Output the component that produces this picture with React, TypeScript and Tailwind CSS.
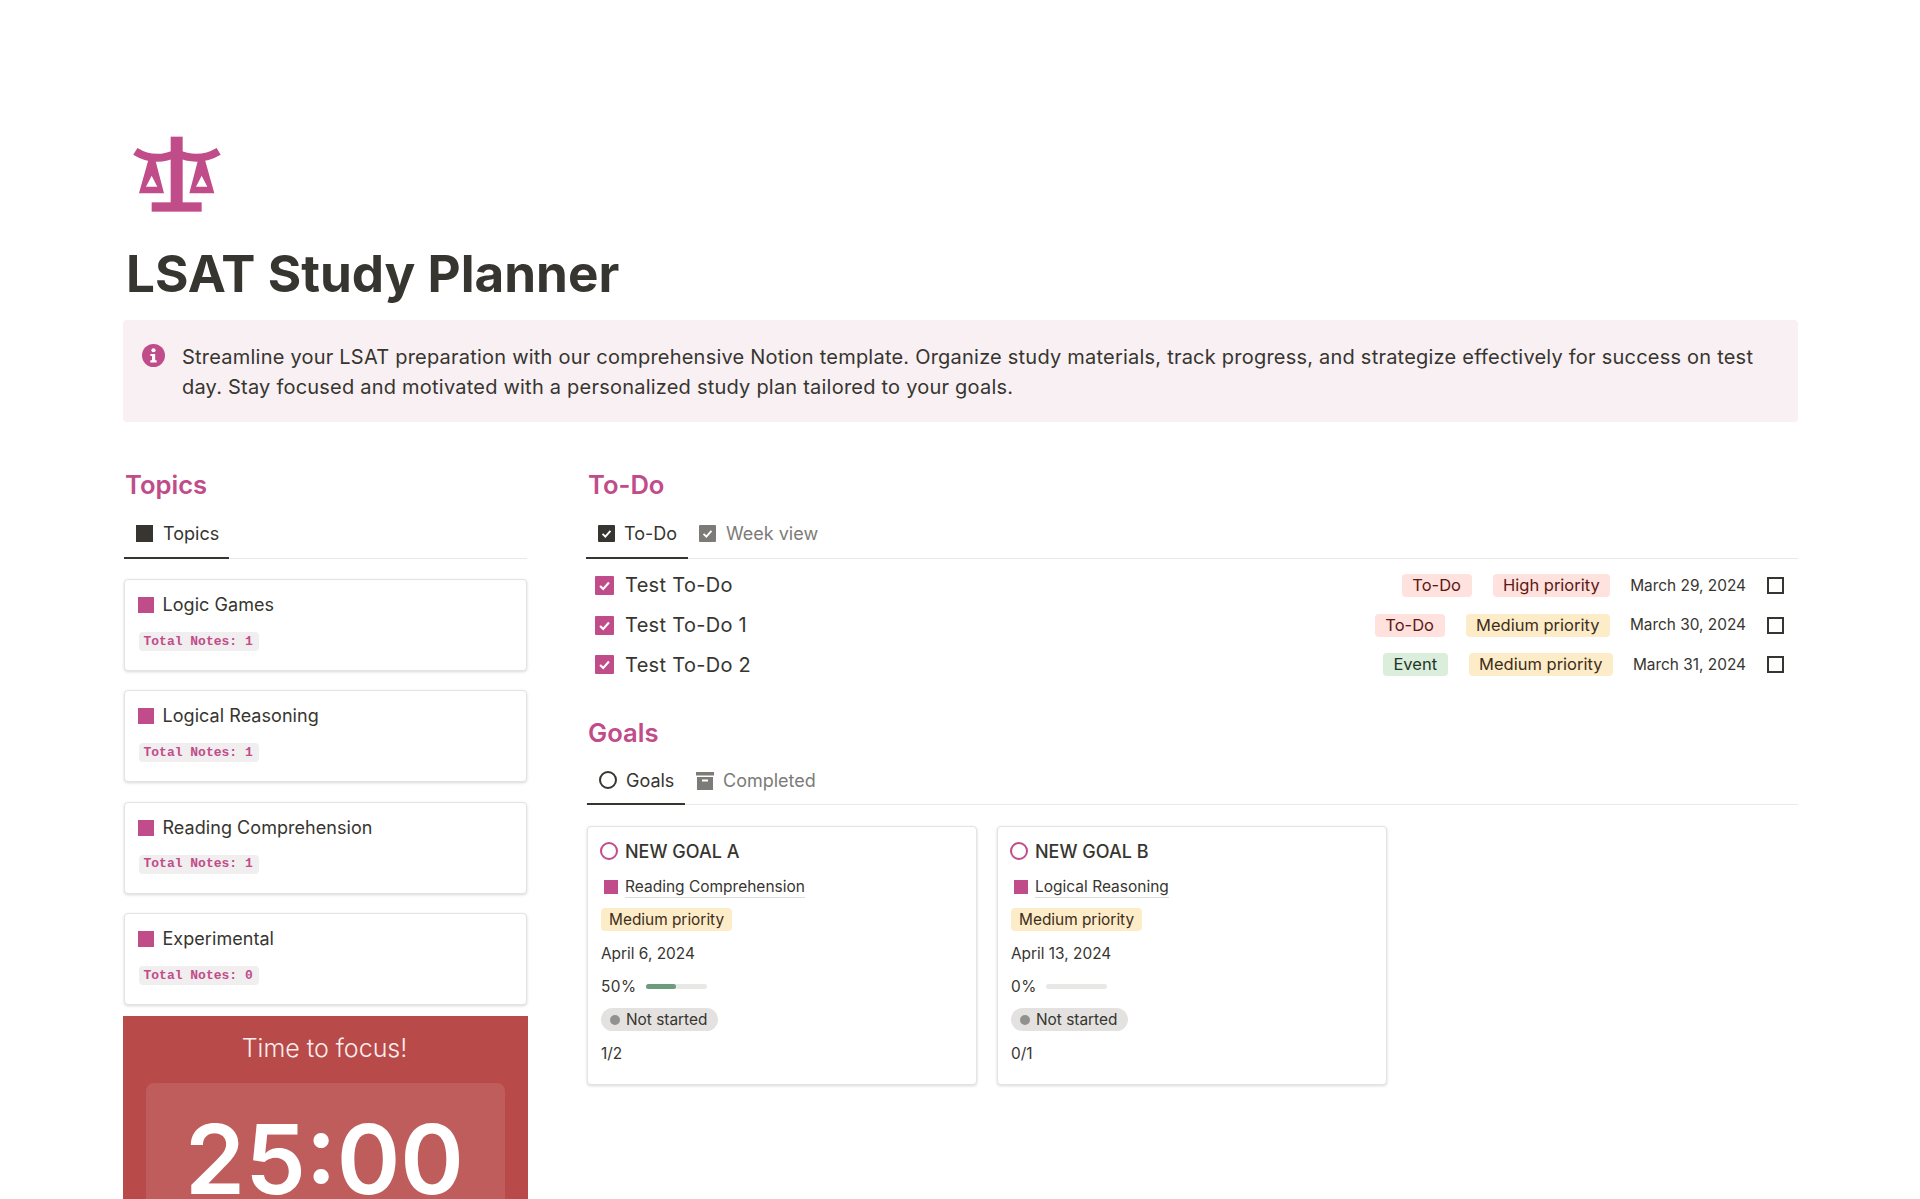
const PINK = '#c14c8a'

const topics = [
  { name: 'Logic Games', notes: 1 },
  { name: 'Logical Reasoning', notes: 1 },
  { name: 'Reading Comprehension', notes: 1 },
  { name: 'Experimental', notes: 0 },
]

const tagStyles = {
  red: 'bg-[#ffe2dd] text-[#5d1715]',
  yellow: 'bg-[#fdecc8] text-[#402c1b]',
  green: 'bg-[#dbeddb] text-[#1c3829]',
}

type TagColor = keyof typeof tagStyles

const todos: { title: string; kind: [string, TagColor]; priority: [string, TagColor]; date: string }[] = [
  { title: 'Test To-Do', kind: ['To-Do', 'red'], priority: ['High priority', 'red'], date: 'March 29, 2024' },
  { title: 'Test To-Do 1', kind: ['To-Do', 'red'], priority: ['Medium priority', 'yellow'], date: 'March 30, 2024' },
  { title: 'Test To-Do 2', kind: ['Event', 'green'], priority: ['Medium priority', 'yellow'], date: 'March 31, 2024' },
]

const goals = [
  { title: 'NEW GOAL A', topic: 'Reading Comprehension', date: 'April 6, 2024', pct: 50, count: '1/2' },
  { title: 'NEW GOAL B', topic: 'Logical Reasoning', date: 'April 13, 2024', pct: 0, count: '0/1' },
]

function ScalesIcon() {
  return (
    <svg viewBox="0 0 360 300" className="block h-[100px] w-[120px]" fill={PINK}>
      <rect x="152" y="35" width="36" height="200" />
      <rect x="95" y="232" width="150" height="28" />
      <path d="M46 79 C 80 100, 120 108, 170 84 C 220 108, 260 100, 296 79" fill="none" stroke={PINK} strokeWidth="24" />
      <path fillRule="evenodd" d="M85 105 H106 L132 205 H57 Z M95 152 L78 185 H112 Z" />
      <path fillRule="evenodd" d="M234 105 H255 L283 205 H208 Z M245 152 L228 185 H262 Z" />
    </svg>
  )
}

function InfoIcon() {
  return (
    <svg viewBox="0 0 22 22" className="h-[23px] w-[23px] shrink-0">
      <circle cx="11" cy="11" r="11" fill={PINK} />
      <circle cx="11" cy="6" r="2" fill="#fff" />
      <path d="M8 9.5 H12.6 V15.6 H14 V17.6 H8 V15.6 H9.6 V11.5 H8 Z" fill="#fff" />
    </svg>
  )
}

function CheckBox({ color, size }: { color: string; size: number }) {
  return (
    <svg viewBox="0 0 18 18" width={size} height={size} className="shrink-0">
      <rect width="18" height="18" rx="1" fill={color} />
      <path d="M4.8 9.4 L7.8 12.3 L13.2 6.2" fill="none" stroke="#fff" strokeWidth="2" />
    </svg>
  )
}

function ArchiveIcon() {
  return (
    <svg viewBox="0 0 18 18" className="h-[18px] w-[18px] shrink-0" fill="#7c7b77">
      <rect x="0" y="0" width="18" height="3.5" />
      <path fillRule="evenodd" d="M1 5 H17 V18 H1 Z M6 7.5 V9.5 H12 V7.5 Z" />
    </svg>
  )
}

function Tag({ label, color }: { label: string; color: TagColor }) {
  return <span className={`flex h-[23px] items-center rounded-[4px] px-[10.5px] text-[16.5px] ${tagStyles[color]}`}>{label}</span>
}

function Heading({ children }: { children: string }) {
  return <h2 className="pl-[2px] text-[25.6px] leading-[32px] font-semibold text-[#c14c8a]">{children}</h2>
}

function TopicCard({ name, notes }: { name: string; notes: number }) {
  return (
    <div className="h-[92px] rounded-[4px] border border-[#e3e3e2] bg-white pt-4 pl-[13.5px] shadow-[0_1px_3px_rgba(15,15,15,0.16)]">
      <div className="flex h-[18px] items-center">
        <span className="h-4 w-4 bg-[#c14c8a]" />
        <span className="ml-[8.5px] text-[18px] leading-[24px] tracking-[0.05px]">{name}</span>
      </div>
      <code className="mt-[18px] ml-[1px] flex h-[19px] w-[120px] items-center rounded-[4px] bg-[#f0eeee] pl-[4.5px] font-['Liberation_Mono',monospace] text-[13px] font-bold text-[#c14c8a]">
        Total Notes: {notes}
      </code>
    </div>
  )
}

function GoalCard({ goal }: { goal: (typeof goals)[number] }) {
  return (
    <div className="h-[259px] w-[390px] rounded-[4px] border border-[#e3e3e2] bg-white pt-[12px] pl-[13px] shadow-[0_1px_3px_rgba(15,15,15,0.16)]">
      <div className="flex h-[24px] items-center">
        <span className="ml-[-1px] h-[18px] w-[18px] rounded-full border-2 border-[#c14c8a]" />
        <span className="ml-[7px] text-[18px] font-medium">{goal.title}</span>
      </div>
      <div className="mt-[12px] flex h-[24px] items-center">
        <span className="ml-[3px] h-[14px] w-[14px] bg-[#c14c8a]" />
        <span className="ml-[7px] border-b border-[#dcdcda] text-[15.5px] leading-[20px]">{goal.topic}</span>
      </div>
      <span className="mt-[9px] flex h-[23px] w-fit items-center rounded-[4px] bg-[#fdecc8] px-2 text-[15.4px] text-[#402c1b]">Medium priority</span>
      <p className="mt-[11px] h-[24px] text-[15.4px] leading-[24px]">{goal.date}</p>
      <div className="mt-[8px] flex h-[24px] items-center">
        <span className="text-[15.4px] tracking-[0.5px]">{goal.pct}%</span>
        <div className="ml-[9px] h-[5px] w-[61px] rounded-full bg-[#e8e8e6]">
          <div className="h-[5px] rounded-full bg-[#6c9b7d]" style={{ width: `${goal.pct}%` }} />
        </div>
      </div>
      <span className="mt-[10px] flex h-[23px] w-fit items-center rounded-full bg-[#e3e2e0] pr-[11px] pl-[9px] text-[15.4px]">
        <span className="mr-[6px] h-[10px] w-[10px] rounded-full bg-[#91918e]" />
        Not started
      </span>
      <p className="mt-[11px] text-[15.4px] leading-[24px]">{goal.count}</p>
    </div>
  )
}

export default function App() {
  return (
    <div className="h-[1199px] overflow-hidden bg-white pt-[125px] pr-[122px] pl-[123px] font-['Inter',sans-serif] text-[#37352f]">
      <div className="ml-[-3px]">
        <ScalesIcon />
      </div>
      <h1 className="mt-[18px] ml-[3px] text-[51.2px] leading-[60px] font-bold">LSAT Study Planner</h1>
      <div className="mt-[17px] flex h-[102px] rounded-[4px] bg-[#f8f0f3] pt-[24px] pr-[30px] pl-[19px]">
        <InfoIcon />
        <p className="mt-[-2px] ml-[17px] text-[20px] leading-[30px] tracking-[0.22px]">
          Streamline your LSAT preparation with our comprehensive Notion template. Organize study materials, track progress, and strategize effectively for success on test day. Stay focused and motivated with a personalized study plan tailored to your goals.
        </p>
      </div>

      <div className="mt-[47px] flex">
        <aside className="w-[405px] shrink-0">
          <Heading>Topics</Heading>
          <div className="mx-px mt-[8px] flex h-[50px] border-b border-[#e9e9e8]">
            <div className="mb-[-1px] flex w-[105px] items-center border-b-2 border-[#37352f] pl-[12px] text-[18px]">
              <span className="h-[17px] w-[17px] bg-[#37352f]" />
              <span className="ml-[10px]">Topics</span>
            </div>
          </div>
          <div className="mt-[20px] flex flex-col gap-[19.3px] pr-px pl-[0.5px]">
            {topics.map((t) => (
              <TopicCard key={t.name} name={t.name} notes={t.notes} />
            ))}
          </div>
          <div className="mt-[11px] h-[300px] bg-[#b84a4a] pt-[16px] text-center">
            <p className="pr-[2px] text-[25px] leading-[32px] font-light text-[#fdeeee]">Time to focus!</p>
            <div className="mx-[23px] mt-[19px] h-[200px] rounded-[8px] bg-[#bf5c5c] pt-[16px] pr-[2px] text-[96.5px] leading-[120px] font-semibold text-white">
              25:00
            </div>
          </div>
        </aside>

        <main className="ml-[58px] min-w-0 flex-1">
          <Heading>To-Do</Heading>
          <div className="mt-[8px] flex h-[50px] border-b border-[#e9e9e8]">
            <div className="mb-[-1px] flex w-[102px] items-center border-b-2 border-[#37352f] pl-[12px] text-[18px]">
              <CheckBox color="#37352f" size={17} />
              <span className="ml-[9px]">To-Do</span>
            </div>
            <div className="ml-[11px] flex items-center text-[18px] text-[#7c7b77]">
              <CheckBox color="#7c7b77" size={17} />
              <span className="ml-[10px]">Week view</span>
            </div>
          </div>
          <div className="mt-[6.5px] flex flex-col">
            {todos.map((t) => (
              <div key={t.title} className="flex h-[39.7px] items-center pr-[14px] pl-[9px]">
                <CheckBox color={PINK} size={19} />
                <span className="ml-[11px] text-[20px] tracking-[0.3px]">{t.title}</span>
                <div className="ml-auto flex items-center gap-[20px]">
                  <div className="mr-px">
                    <Tag label={t.kind[0]} color={t.kind[1]} />
                  </div>
                  <Tag label={t.priority[0]} color={t.priority[1]} />
                  <span className="text-[15.4px]">{t.date}</span>
                  <span className="ml-px h-[17px] w-[17px] border-2 border-[#37352f]" />
                </div>
              </div>
            ))}
          </div>

          <div className="mt-[32.5px]">
            <Heading>Goals</Heading>
          </div>
          <div className="mt-[8px] flex h-[48px] border-b border-[#e9e9e8]">
            <div className="mb-[-1px] ml-px flex w-[98px] items-center border-b-2 border-[#37352f] pl-[12px] text-[18px]">
              <span className="h-[18px] w-[18px] rounded-full border-2 border-[#37352f]" />
              <span className="ml-[9px]">Goals</span>
            </div>
            <div className="ml-[11px] flex items-center text-[18px] text-[#7c7b77]">
              <ArchiveIcon />
              <span className="ml-[9px]">Completed</span>
            </div>
          </div>
          <div className="mt-[21px] ml-px flex gap-[20px]">
            {goals.map((g) => (
              <GoalCard key={g.title} goal={g} />
            ))}
          </div>
        </main>
      </div>
    </div>
  )
}
